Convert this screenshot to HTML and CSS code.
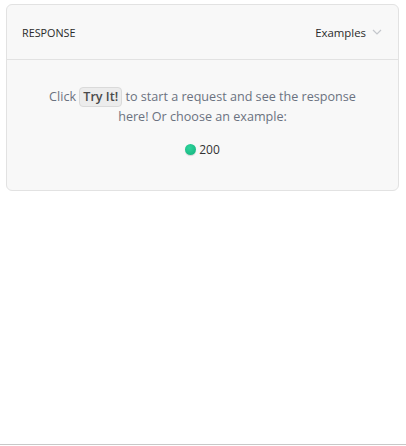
FILE: index.html
```html
<!DOCTYPE html>
<html>
<head>
<meta charset="utf-8">
<link rel="stylesheet" href="styles.css">
</head>
<body>
<div class="page">
  <section class="panel">
    <header class="panel-head">
      <span class="panel-title">RESPONSE</span>
      <button class="examples">Examples
        <svg class="chev" width="10" height="6" viewBox="0 0 10 6"><path d="M1 1l4 4 4-4" fill="none" stroke="#c4c7cc" stroke-width="1.2"/></svg>
      </button>
    </header>
    <div class="panel-body">
      <p class="hint">Click <span class="kbd">Try It!</span> to start a request and see the response here! Or choose an example:</p>
      <div class="codes">
        <span class="code"><span class="dot"></span>200</span>
      </div>
    </div>
  </section>
  <div class="spacer"></div>
  <div class="bottom-line"></div>
</div>
</body>
</html>
```
FILE: styles.css
```css
html, body {
  margin: 0;
  padding: 0;
  background: #fff;
}
body {
  font-family: "Open Sans", "Noto Sans", sans-serif;
}
.page {
  height: 446px;
  display: flex;
  flex-direction: column;
  padding: 4px 7px 0 6px;
  box-sizing: border-box;
}
.panel {
  background: #f8f8f8;
  border: 1px solid #e2e2e2;
  border-radius: 6px;
  height: 187px;
  box-sizing: border-box;
  display: flex;
  flex-direction: column;
}
.panel-head {
  height: 54px;
  display: flex;
  align-items: center;
  justify-content: space-between;
  padding: 0 16px 0 15px;
  border-bottom: 1px solid #e2e2e2;
  flex: none;
}
.panel-title {
  font-size: 10.8px;
  color: #2b2b2b;
  letter-spacing: 0;
}
.examples {
  background: none;
  border: 0;
  padding: 0;
  font: inherit;
  font-size: 11.4px;
  color: #2b2b2b;
  display: flex;
  align-items: center;
  gap: 6px;
}
.panel-body {
  flex: 1;
  display: flex;
  flex-direction: column;
  align-items: center;
  padding: 27px 34px 0;
}
.hint {
  margin: 0;
  text-align: center;
  font-size: 12.6px;
  line-height: 19px;
  color: #6b7280;
}
.kbd {
  display: inline-block;
  background: #ececec;
  border: 1px solid #dadada;
  border-radius: 4px;
  padding: 0 3px;
  line-height: 18px;
  color: #4a4a4a;
  font-weight: 600;
}
.codes {
  margin-top: 15px;
  display: flex;
  justify-content: center;
}
.code {
  display: flex;
  align-items: center;
  gap: 3px;
  font-size: 12px;
  color: #333;
}
.dot {
  width: 11px;
  height: 11px;
  border-radius: 50%;
  background: radial-gradient(circle at 40% 35%, #2fd59c, #12b07c);
  box-shadow: 0 1px 1px rgba(0,0,0,0.15);
}
.spacer {
  flex: 1;
}
.bottom-line {
  height: 1px;
  background: #c8c8c8;
  margin: 0 -7px 1px -6px;
}
```
